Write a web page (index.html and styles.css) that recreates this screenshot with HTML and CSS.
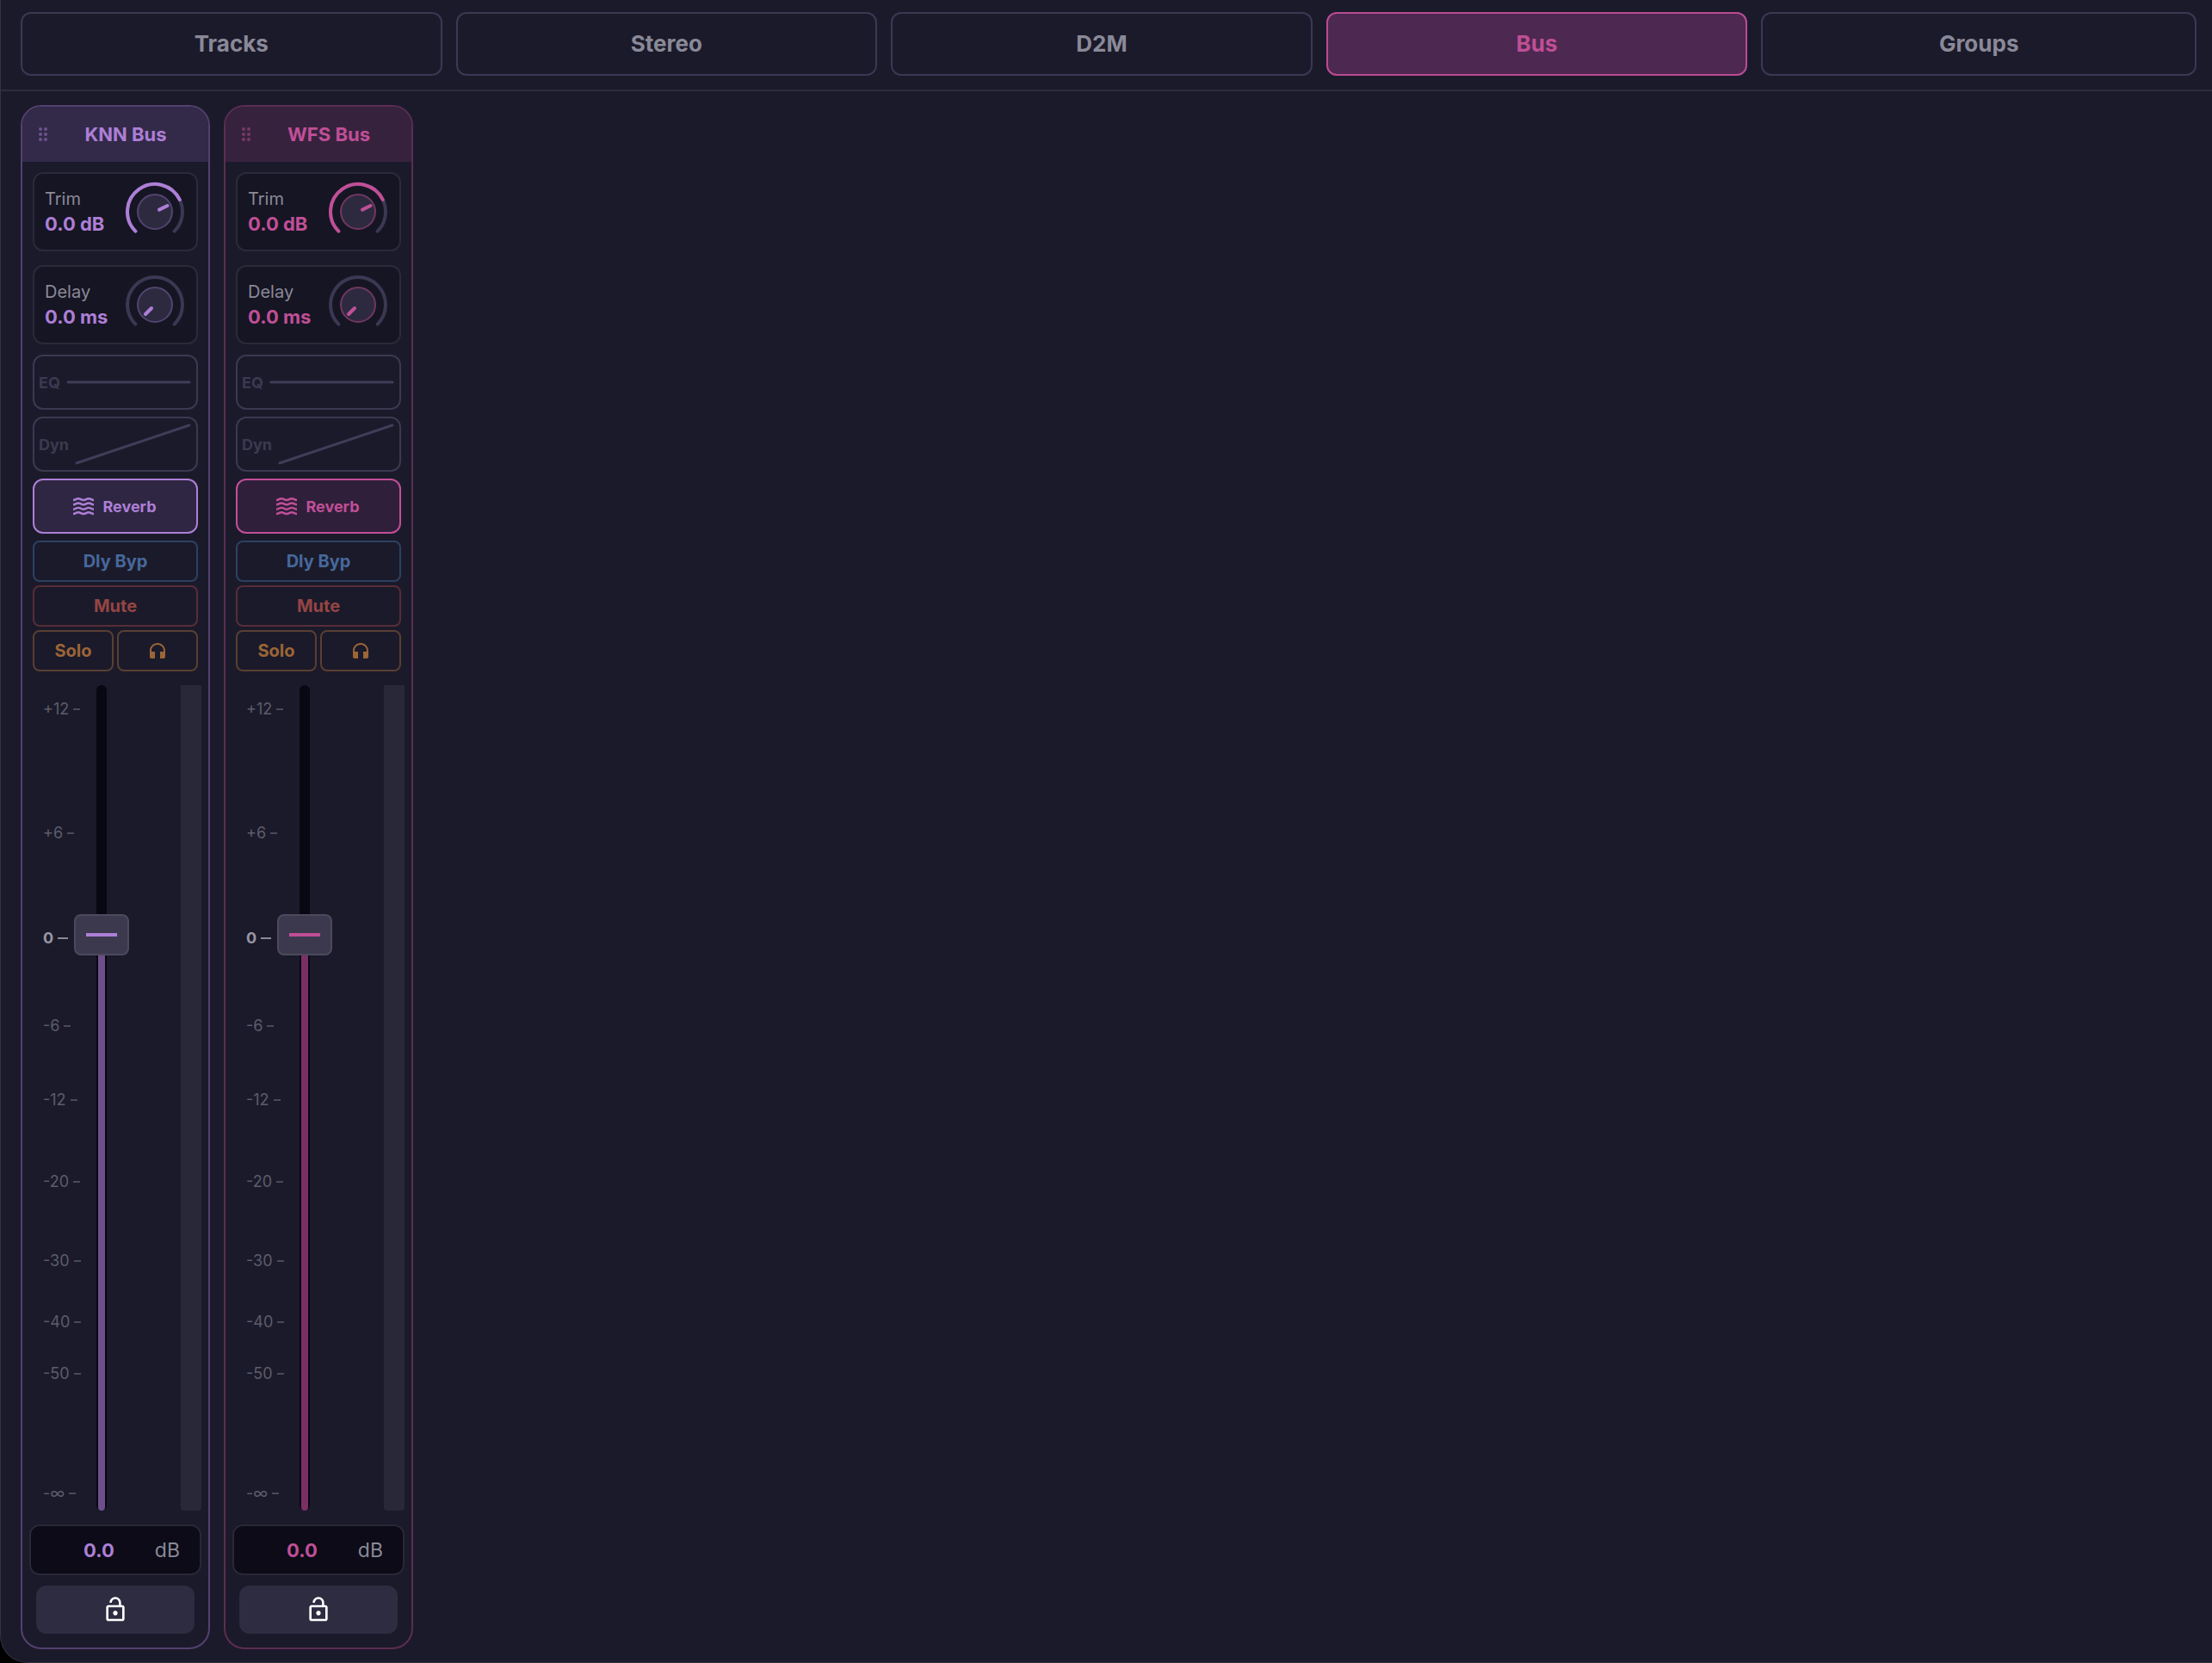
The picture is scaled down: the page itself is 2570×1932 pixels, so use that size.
FILE: index.html
```html
<!DOCTYPE html>
<html lang="en">
<head>
<meta charset="utf-8">
<meta name="viewport" content="width=device-width, initial-scale=1">
<title>Mixer</title>
<link rel="stylesheet" href="styles.css">
</head>
<body>
<svg class="sprite" aria-hidden="true">
  <symbol id="i-grip" viewBox="0 0 10 16">
    <circle cx="2" cy="2" r="2"/><circle cx="8" cy="2" r="2"/>
    <circle cx="2" cy="8" r="2"/><circle cx="8" cy="8" r="2"/>
    <circle cx="2" cy="14" r="2"/><circle cx="8" cy="14" r="2"/>
  </symbol>
  <symbol id="i-waves" viewBox="0 0 24 24">
    <g fill="none" stroke="currentColor" stroke-width="2.4">
      <path d="M0 5C3 5 3 3.200 6 3.200S9 5 12 5s3-1.800 6-1.800S21 5 24 5"/>
      <path d="M0 10.300C3 10.300 3 8.500 6 8.500s3 1.800 6 1.800 3-1.800 6-1.800 3 1.800 6 1.800"/>
      <path d="M0 15.700C3 15.700 3 13.900 6 13.900s3 1.800 6 1.800 3-1.800 6-1.800 3 1.800 6 1.800"/>
      <path d="M0 21C3 21 3 19.200 6 19.200S9 21 12 21s3-1.800 6-1.800S21 21 24 21"/>
    </g>
  </symbol>
  <symbol id="i-phones" viewBox="0 0 24 24">
    <path d="M12 3c-4.970 0-9 4.030-9 9v7c0 1.100.9 2 2 2h4v-8H5v-1c0-3.870 3.130-7 7-7s7 3.130 7 7v1h-4v8h4c1.100 0 2-.9 2-2v-7c0-4.970-4.030-9-9-9z"/>
  </symbol>
  <symbol id="i-unlock" viewBox="0 0 24 24">
    <path d="M12 17c1.100 0 2-.9 2-2s-.9-2-2-2-2 .9-2 2 .9 2 2 2zm6-9h-1V6c0-2.760-2.240-5-5-5S7 3.240 7 6h1.900c0-1.710 1.390-3.100 3.100-3.100 1.710 0 3.100 1.390 3.100 3.100v2H6c-1.100 0-2 .9-2 2v10c0 1.100.9 2 2 2h12c1.100 0 2-.9 2-2V10c0-1.100-.9-2-2-2zm0 12H6V10h12v10z"/>
  </symbol>
</svg>
<div class="app">
  <nav class="tabs">
    <button class="tab" type="button">Tracks</button>
    <button class="tab" type="button">Stereo</button>
    <button class="tab" type="button">D2M</button>
    <button class="tab active" type="button" aria-current="page">Bus</button>
    <button class="tab" type="button">Groups</button>
  </nav>
  <main class="strips">
    <section class="strip knn">
      <header class="head">
        <svg class="grip"><use href="#i-grip"/></svg>
        <h2 class="name">KNN Bus</h2>
      </header>
      <div class="body">
        <div class="param">
          <div class="read"><label class="label" for="trim1">Trim</label><output class="val">0.0 dB</output></div>
          <div class="knob">
            <svg class="dial" viewBox="0 0 72 72">
              <path class="arc" d="M13.400 58.600A32 32 0 1 1 58.600 58.600"/>
              <path class="arc on" d="M13.400 58.600A32 32 0 1 1 64.800 22"/>
              <circle class="cap" cx="36" cy="36" r="20"/>
              <path class="hand" d="M41 33.600L50.500 29"/>
            </svg>
            <input class="turn" id="trim1" type="range" min="-60" max="20" value="0">
          </div>
        </div>
        <div class="param">
          <div class="read"><label class="label" for="delay1">Delay</label><output class="val">0.0 ms</output></div>
          <div class="knob">
            <svg class="dial" viewBox="0 0 72 72">
              <path class="arc" d="M13.400 58.600A32 32 0 1 1 58.600 58.600"/>
              <circle class="cap" cx="36" cy="36" r="20"/>
              <path class="hand" d="M32 40L25 47"/>
            </svg>
            <input class="turn" id="delay1" type="range" min="0" max="500" value="0">
          </div>
        </div>
        <div class="inserts">
          <button class="fx" type="button">EQ
            <svg class="curve" viewBox="0 0 144 60" preserveAspectRatio="none"><path d="M2 30H142"/></svg>
          </button>
          <button class="fx" type="button">Dyn
            <svg class="curve" viewBox="0 0 136 60" preserveAspectRatio="none"><path d="M2 52L134 8"/></svg>
          </button>
          <button class="fx reverb" type="button"><svg class="ico"><use href="#i-waves"/></svg>Reverb</button>
        </div>
        <div class="switches">
          <button class="sw byp" type="button">Dly Byp</button>
          <button class="sw mute" type="button">Mute</button>
          <button class="sw solo" type="button">Solo</button>
          <button class="sw solo" type="button" aria-label="Listen"><svg class="ico"><use href="#i-phones"/></svg></button>
        </div>
      </div>
      <div class="level">
        <ul class="scale">
          <li>+12</li><li>+6</li><li class="zero">0</li><li>-6</li><li>-12</li><li>-20</li><li>-30</li><li>-40</li><li>-50</li><li>-∞</li>
        </ul>
        <div class="fader">
          <div class="rail"><div class="fill" style="height:70%"></div></div>
          <input class="slide" type="range" min="0" max="1000" value="708" aria-label="KNN Bus level">
        </div>
        <div class="meter"></div>
      </div>
      <div class="foot">
        <label class="gain"><input class="num" type="text" value="0.0" size="3">dB</label>
        <button class="lock" type="button" aria-label="Lock"><svg class="ico big"><use href="#i-unlock"/></svg></button>
      </div>
    </section>
    <section class="strip wfs">
      <header class="head">
        <svg class="grip"><use href="#i-grip"/></svg>
        <h2 class="name">WFS Bus</h2>
      </header>
      <div class="body">
        <div class="param">
          <div class="read"><label class="label" for="trim2">Trim</label><output class="val">0.0 dB</output></div>
          <div class="knob">
            <svg class="dial" viewBox="0 0 72 72">
              <path class="arc" d="M13.400 58.600A32 32 0 1 1 58.600 58.600"/>
              <path class="arc on" d="M13.400 58.600A32 32 0 1 1 64.800 22"/>
              <circle class="cap" cx="36" cy="36" r="20"/>
              <path class="hand" d="M41 33.600L50.500 29"/>
            </svg>
            <input class="turn" id="trim2" type="range" min="-60" max="20" value="0">
          </div>
        </div>
        <div class="param">
          <div class="read"><label class="label" for="delay2">Delay</label><output class="val">0.0 ms</output></div>
          <div class="knob">
            <svg class="dial" viewBox="0 0 72 72">
              <path class="arc" d="M13.400 58.600A32 32 0 1 1 58.600 58.600"/>
              <circle class="cap" cx="36" cy="36" r="20"/>
              <path class="hand" d="M32 40L25 47"/>
            </svg>
            <input class="turn" id="delay2" type="range" min="0" max="500" value="0">
          </div>
        </div>
        <div class="inserts">
          <button class="fx" type="button">EQ
            <svg class="curve" viewBox="0 0 144 60" preserveAspectRatio="none"><path d="M2 30H142"/></svg>
          </button>
          <button class="fx" type="button">Dyn
            <svg class="curve" viewBox="0 0 136 60" preserveAspectRatio="none"><path d="M2 52L134 8"/></svg>
          </button>
          <button class="fx reverb" type="button"><svg class="ico"><use href="#i-waves"/></svg>Reverb</button>
        </div>
        <div class="switches">
          <button class="sw byp" type="button">Dly Byp</button>
          <button class="sw mute" type="button">Mute</button>
          <button class="sw solo" type="button">Solo</button>
          <button class="sw solo" type="button" aria-label="Listen"><svg class="ico"><use href="#i-phones"/></svg></button>
        </div>
      </div>
      <div class="level">
        <ul class="scale">
          <li>+12</li><li>+6</li><li class="zero">0</li><li>-6</li><li>-12</li><li>-20</li><li>-30</li><li>-40</li><li>-50</li><li>-∞</li>
        </ul>
        <div class="fader">
          <div class="rail"><div class="fill" style="height:70%"></div></div>
          <input class="slide" type="range" min="0" max="1000" value="708" aria-label="WFS Bus level">
        </div>
        <div class="meter"></div>
      </div>
      <div class="foot">
        <label class="gain"><input class="num" type="text" value="0.0" size="3">dB</label>
        <button class="lock" type="button" aria-label="Lock"><svg class="ico big"><use href="#i-unlock"/></svg></button>
      </div>
    </section>
  </main>
</div>
</body>
</html>
```
FILE: styles.css
```css
* { box-sizing: border-box; }
html { background: #000; }
body {
  margin: 0;
  font-family: Inter, "Liberation Sans", sans-serif;
  font-size: 20px;
}
button, input { font: inherit; color: inherit; margin: 0; }
button { padding: 0; cursor: pointer; }
.sprite { display: none; }

.app {
  min-height: 100vh;
  display: flex;
  flex-direction: column;
  background: #1b1a2a;
  border-left: 1px solid #33323f;
  border-bottom: 1px solid #33323f;
  border-bottom-left-radius: 32px;
}

/* Tab bar */
.tabs {
  display: grid;
  grid-template-columns: repeat(5, 1fr);
  padding: 14px 18px 16px 23px;
  border-bottom: 2px solid #2d2b3d;
}
.tab {
  height: 74px;
  margin-right: 16px;
  padding-bottom: 2px;
  border: 2px solid #3b3853;
  border-radius: 12px;
  background: none;
  color: #8a8998;
  font-size: 26px;
  font-weight: 700;
}
.tab:last-child { margin-right: 0; }
.tab.active { background: #4d2850; border-color: #b94c92; color: #bf4f95; }

/* Channel strips */
.strips {
  flex: 1;
  display: flex;
  gap: 16px;
  padding: 16px 23px 15px;
}
.strip {
  width: 220px;
  display: flex;
  flex-direction: column;
  border: 2px solid var(--edge);
  border-radius: 24px;
  overflow: hidden;
}
.knn { --accent: #ad7fd6; --edge: #54406f; --head: #322a48; --soft: #2e2642; --grip: #6d538e; --ring: #52446f; --fill: #6f4f8b; }
.wfs { --accent: #c04f97; --edge: #5b2d52; --head: #37223e; --soft: #301f3b; --grip: #793965; --ring: #713760; --fill: #7a3065; }

.head {
  height: 64px;
  display: flex;
  align-items: center;
  gap: 14px;
  padding: 0 19px;
  background: var(--head);
}
.grip { width: 10px; height: 16px; fill: var(--grip); }
.name {
  flex: 1;
  margin: 0;
  text-align: center;
  font-size: 22px;
  font-weight: 700;
  color: var(--accent);
}

.body { padding: 12px 12px 16px; }
.param {
  height: 92px;
  display: flex;
  align-items: center;
  justify-content: space-between;
  margin-bottom: 16px;
  padding: 0 12px;
  border: 2px solid #2b2a3a;
  border-radius: 12px;
  background: #161523;
}
.read { display: flex; flex-direction: column; white-space: nowrap; }
.label { line-height: 28px; color: #8a8998; }
.val { line-height: 30px; font-size: 22px; font-weight: 700; color: var(--accent); }
.knob { display: grid; width: 72px; flex: none; }
.dial, .turn { grid-area: 1 / 1; width: 72px; height: 72px; }
.turn { opacity: 0; }
.arc { fill: none; stroke: #3b3853; stroke-width: 4; stroke-linecap: round; }
.arc.on { stroke: var(--accent); }
.cap { fill: #2d2a40; stroke: var(--ring); stroke-width: 2; }
.hand { stroke: var(--accent); stroke-width: 4; stroke-linecap: round; }

.inserts { display: grid; grid-template-columns: minmax(0, 1fr); gap: 8px; margin-top: -4px; }
.fx {
  height: 64px;
  display: flex;
  align-items: center;
  gap: 7px;
  padding: 0 6px 0 5px;
  border: 2px solid #3b3950;
  border-radius: 12px;
  background: none;
  color: #3b3950;
  font-size: 18px;
  font-weight: 700;
}
.curve { flex: 1; width: 0; min-width: 0; height: 60px; }
.curve path { fill: none; stroke: #403d58; stroke-width: 3; stroke-linecap: round; }
.reverb {
  justify-content: center;
  gap: 10px;
  border-color: var(--accent);
  background: var(--soft);
  color: var(--accent);
}
.ico { width: 24px; height: 24px; fill: currentColor; display: block; }
.ico.big { width: 32px; height: 32px; }

.switches { display: grid; grid-template-columns: 1fr 1fr; gap: 4px; margin-top: 8px; }
.sw {
  height: 48px;
  display: grid;
  place-items: center;
  border: 2px solid;
  border-radius: 8px;
  background: none;
  font-size: 20px;
  font-weight: 700;
}
.byp { grid-column: span 2; border-color: #2c4161; color: #46689b; }
.mute { grid-column: span 2; border-color: #572d38; color: #944544; }
.solo { border-color: #593f31; color: #9b6537; }

/* Level fader */
.level { flex: 1; display: flex; padding: 0 8px 0 24px; }
.scale {
  width: 36px;
  display: grid;
  grid-template-rows: 144fr 122fr 102fr 86fr 95fr 92fr 71fr 60fr 139fr 24fr;
  margin: 0;
  padding: 16px 0 8px;
  list-style: none;
  font-size: 18px;
  line-height: 24px;
  color: #5d5c6b;
}
.scale li { height: 24px; display: flex; align-items: center; gap: 5px; white-space: nowrap; }
.scale li::after { content: ""; width: 8px; height: 2px; flex: none; background: #4a4959; }
.scale .zero { font-weight: 700; color: #9897a5; }
.scale .zero::after { width: 12px; background: #8a8998; }
.fader { width: 64px; display: grid; justify-items: center; }
.rail, .slide { grid-area: 1 / 1; height: 100%; }
.rail {
  width: 12px;
  display: flex;
  flex-direction: column;
  justify-content: flex-end;
  align-items: center;
  border-radius: 6px;
  background: #080812;
}
.fill { width: 8px; border-radius: 0 0 4px 4px; background: var(--fill); }
.slide {
  appearance: none;
  width: 64px;
  min-height: 0;
  writing-mode: vertical-lr;
  direction: rtl;
  background: none;
}
.slide::-webkit-slider-thumb {
  appearance: none;
  width: 64px;
  height: 48px;
  border: 2px solid #4b495c;
  border-radius: 8px;
  background: linear-gradient(var(--accent), var(--accent)) center / 36px 4px no-repeat #3c394e;
}
.meter { width: 24px; margin-left: auto; background: #292838; border-radius: 0 0 4px 4px; }

.foot { padding: 16px 8px; }
.gain {
  height: 59px;
  display: flex;
  align-items: center;
  padding: 0 23px 0 14px;
  border: 2px solid #292837;
  border-radius: 12px;
  background: #0c0b17;
  color: #8a8998;
  font-size: 23px;
}
.num {
  flex: 1;
  min-width: 0;
  padding: 0;
  border: 0;
  background: none;
  text-align: center;
  font-size: 22px;
  font-weight: 700;
  color: var(--accent);
}
.lock {
  width: 184px;
  height: 56px;
  display: grid;
  place-items: center;
  margin: 12px auto 0;
  border: 0;
  border-radius: 12px;
  background: #2d2c40;
  color: #fff;
}
```
